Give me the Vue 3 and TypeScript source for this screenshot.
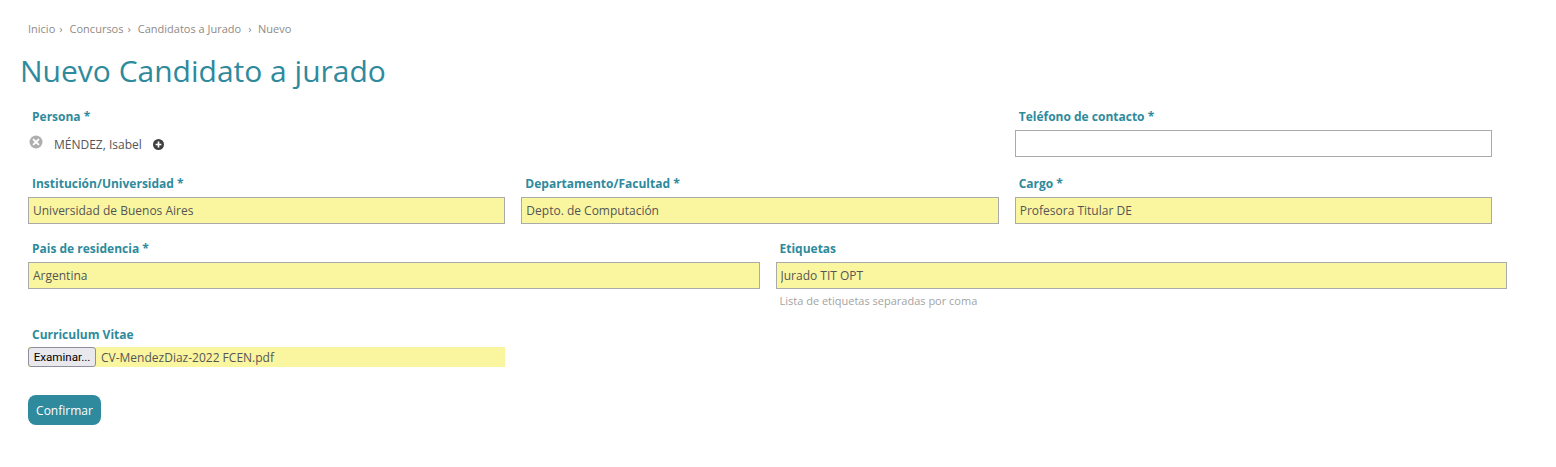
<script setup lang="ts">
const crumbs = [
  { text: 'Inicio', sep: '›' },
  { text: 'Concursos', sep: '›' },
  { text: 'Candidatos a Jurado', sep: '›' },
  { text: 'Nuevo', sep: '' },
]
</script>

<template>
  <main class="page">
    <nav class="crumbs">
      <span v-for="c in crumbs" :key="c.text" class="crumb">
        <span>{{ c.text }}</span><span v-if="c.sep" class="sep">{{ c.sep }}</span>
      </span>
    </nav>
    <h1 class="title">Nuevo Candidato a jurado</h1>

    <form class="form" @submit.prevent>
      <div class="row row-first">
        <div class="col grow">
          <label class="label">Persona *</label>
          <div class="person">
            <svg class="remove" width="14" height="14" viewBox="0 0 14 14">
              <circle cx="7" cy="7" r="6.5" fill="#aeaeae" />
              <path d="M4.6 4.6l4.8 4.8M9.4 4.6l-4.8 4.8" stroke="#fff" stroke-width="2" stroke-linecap="round" />
            </svg>
            <span class="person-name">MÉNDEZ, Isabel</span>
            <svg class="add" width="11" height="11" viewBox="0 0 11 11">
              <circle cx="5.5" cy="5.5" r="5.5" fill="#3f3f3f" />
              <path d="M5.5 2.6v5.8M2.6 5.5h5.8" stroke="#fff" stroke-width="1.7" />
            </svg>
          </div>
        </div>
        <div class="col third">
          <label class="label">Teléfono de contacto *</label>
          <input class="input empty" type="text" />
        </div>
      </div>

      <div class="row row-second">
        <div class="col third">
          <label class="label">Institución/Universidad *</label>
          <input class="input" type="text" value="Universidad de Buenos Aires" />
        </div>
        <div class="col third">
          <label class="label">Departamento/Facultad *</label>
          <input class="input" type="text" value="Depto. de Computación" />
        </div>
        <div class="col third">
          <label class="label">Cargo *</label>
          <input class="input" type="text" value="Profesora Titular DE" />
        </div>
      </div>

      <div class="row row-third">
        <div class="col half">
          <label class="label">Pais de residencia *</label>
          <input class="input" type="text" value="Argentina" />
        </div>
        <div class="col half">
          <label class="label">Etiquetas</label>
          <input class="input" type="text" value="Jurado TIT OPT" />
          <p class="help">Lista de etiquetas separadas por coma</p>
        </div>
      </div>

      <div class="row row-fourth">
        <div class="col third">
          <label class="label">Curriculum Vitae</label>
          <div class="file">
            <button class="browse" type="button">Examinar...</button>
            <span class="file-name">CV-MendezDiaz-2022 FCEN.pdf</span>
          </div>
        </div>
      </div>

      <div class="actions">
        <button class="confirm" type="submit">Confirmar</button>
      </div>
    </form>
  </main>
</template>

<style scoped>
.page {
  box-sizing: border-box;
  width: 1556px;
  height: 467px;
  padding: 22px 40px 0 20px;
  background: #fff;
  color: #555;
  font-family: "Open Sans", sans-serif;
  font-size: 12px;
  overflow: hidden;
}
.crumbs {
  display: flex;
  height: 14px;
  padding-left: 8px;
  line-height: 14px;
  font-size: 11px;
  color: #8f8a86;
}
.crumb { white-space: pre; }
.sep { margin: 0 7px 0 4px; }
.crumb:nth-child(3) .sep { margin: 0 6.5px 0 7px; }
.title {
  margin: 14px 0 0;
  height: 42px;
  font-size: 30px;
  font-weight: 400;
  line-height: 42px;
  color: #2e8a9c;
}
.form { margin-top: 17px; }
.row { display: flex; width: 1495px; }
.row-first { height: 52px; }
.row-second { margin-top: 15px; height: 50px; }
.row-third { margin-top: 15px; height: 71px; }
.row-fourth { margin-top: 15px; height: 68px; }
.col {
  box-sizing: border-box;
  padding: 0 8px;
  min-width: 0;
}
.grow { width: 66%; }
.third { width: 33%; }
.half { width: 50%; }
.label {
  display: block;
  height: 14px;
  padding-left: 4px;
  font-size: 12px;
  font-weight: 700;
  line-height: 16px;
  color: #2e8a9c;
}
.row-first .label, .row-second .label, .row-third .label { margin-bottom: 7px; }
.person {
  display: flex;
  align-items: center;
  height: 16px;
  margin-top: 13px;
  padding-left: 1px;
}
.remove { margin-top: -4px; }
.person-name { margin-left: 11px; font-size: 12px; color: #555; }
.add { margin-left: 11px; }
.input {
  display: block;
  box-sizing: border-box;
  width: 100%;
  height: 27px;
  padding: 0 4px;
  border: 1px solid #aaa;
  border-radius: 0;
  outline: none;
  background: #faf6a0;
  color: #555;
  font-family: "Open Sans", sans-serif;
  font-size: 12px;
}
.empty { background: #fff; }
.help {
  margin: 5px 0 0 4px;
  font-size: 11px;
  line-height: 14px;
  color: #a3a3a3;
}
.file {
  display: flex;
  align-items: center;
  height: 20px;
  margin-top: 6px;
  background: #faf6a0;
}
.browse {
  box-sizing: border-box;
  width: 68px;
  height: 20px;
  padding: 0;
  border: 1px solid #8f8f9d;
  border-radius: 3px;
  background: #e9e9ed;
  color: #000;
  font-family: Roboto, sans-serif;
  font-size: 11.6px;
}
.file-name { margin-left: 5px; font-size: 12px; color: #555; }
.actions { padding-left: 8px; }
.confirm {
  box-sizing: border-box;
  width: 73px;
  height: 30px;
  padding: 0;
  border: none;
  border-radius: 8px;
  background: #2e8a9c;
  color: #fff;
  font-family: "Open Sans", sans-serif;
  font-size: 12px;
}
</style>
